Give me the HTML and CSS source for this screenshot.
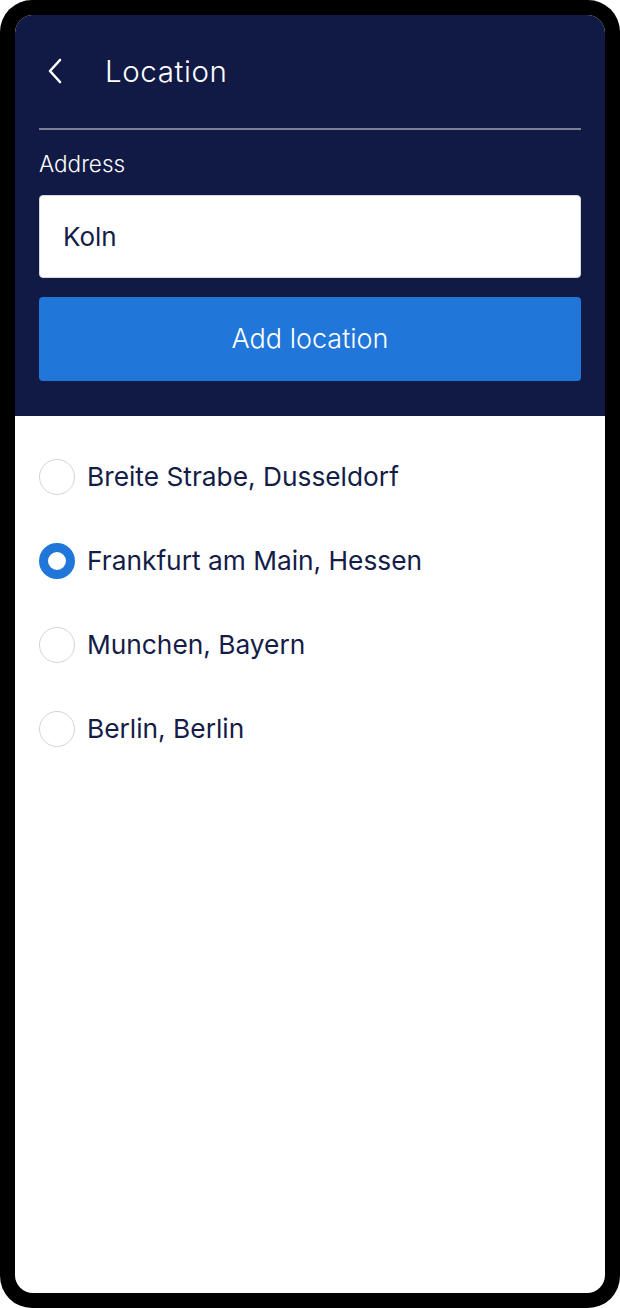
FILE: index.html
```html
<!DOCTYPE html>
<html>
<head>
<meta charset="utf-8">
<link rel="stylesheet" href="styles.css">
</head>
<body>
<div class="phone">
  <div class="screen">
    <header class="header">
      <div class="topbar">
        <svg class="back" width="16" height="26" viewBox="0 0 16 26"><path d="M13 2 L3 13 L13 24" fill="none" stroke="#fff" stroke-width="2.6" stroke-linecap="round" stroke-linejoin="round"/></svg>
        <h1 class="title">Location</h1>
      </div>
      <div class="divider"></div>
      <label class="label">Address</label>
      <div class="input">Koln</div>
      <button class="btn">Add location</button>
    </header>
    <ul class="list">
      <li class="item"><span class="radio"></span><span class="text">Breite Strabe, Dusseldorf</span></li>
      <li class="item"><span class="radio checked"></span><span class="text">Frankfurt am Main, Hessen</span></li>
      <li class="item"><span class="radio"></span><span class="text">Munchen, Bayern</span></li>
      <li class="item"><span class="radio"></span><span class="text">Berlin, Berlin</span></li>
    </ul>
  </div>
</div>
</body>
</html>
```
FILE: styles.css
```css
* { box-sizing: border-box; }
html, body { margin: 0; padding: 0; background: #fff; }
body { font-family: Inter, "Noto Sans", sans-serif; }
.phone {
  width: 620px;
  height: 1308px;
  background: #000;
  border-radius: 32px;
  padding: 15px;
}
.screen {
  width: 590px;
  height: 1278px;
  background: #fff;
  border-radius: 18px;
  overflow: hidden;
}
.header {
  background: #111a45;
  padding: 0 24px 35px 24px;
}
.topbar {
  height: 113px;
  display: flex;
  align-items: center;
  padding-left: 8px;
}
.back { display: block; margin-top: -2px; }
.title {
  margin: -2px 0 0 42px;
  font-weight: 300;
  font-size: 29.5px;
  color: #fff;
  letter-spacing: 0.6px;
}
.divider { height: 1.5px; background: #7a7f9a; }
.label {
  display: block;
  margin-top: 20px;
  font-size: 22.5px;
  font-weight: 300;
  color: #fff;
  line-height: 28px;
}
.input {
  margin-top: 17px;
  height: 83px;
  background: #fff;
  border: 1px solid #d6d8de;
  border-radius: 4px;
  padding-left: 23px;
  display: flex;
  align-items: center;
  font-size: 26px;
  color: #141c48;
}
.btn {
  display: block;
  width: 100%;
  margin-top: 19px;
  height: 84px;
  background: #2176d9;
  border: none;
  border-radius: 4px;
  color: #fff;
  font-family: inherit;
  font-size: 27px;
  font-weight: 300;
}
.list {
  list-style: none;
  margin: 0;
  padding: 19px 24px 0 24px;
}
.item {
  display: flex;
  align-items: center;
  height: 84px;
}
.radio {
  width: 36px;
  height: 36px;
  border-radius: 50%;
  border: 1.5px solid #d4d4d8;
  flex: none;
}
.radio.checked {
  border: 9px solid #2176d9;
  background: #fff;
}
.text {
  margin-left: 12px;
  font-size: 26.3px;
  color: #141c48;
}
```
